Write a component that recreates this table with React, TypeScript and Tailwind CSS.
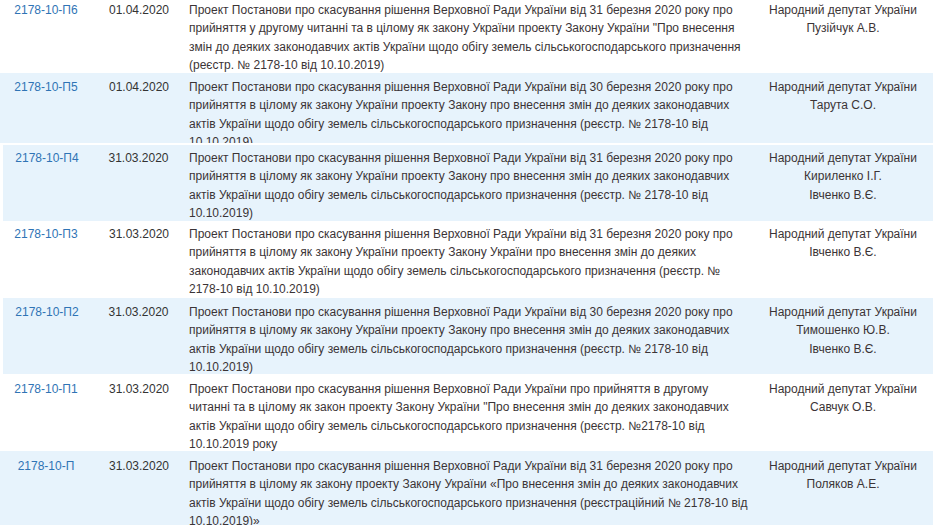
type Row = {
  id: string;
  date: string;
  lines: string[];
  deputies: string[];
  blue?: boolean;
  indent?: boolean;
  h: string;
  pt: string;
  gap?: boolean;
};

const ROWS: Row[] = [
  {
    id: "2178-10-П6",
    date: "01.04.2020",
    lines: [
      "Проект Постанови про скасування рішення Верховної Ради України від 31 березня 2020 року про",
      "прийняття у другому читанні та в цілому як закону України проекту Закону України \"Про внесення",
      "змін до деяких законодавчих актів України щодо обігу земель сільськогосподарського призначення",
      "(реєстр. № 2178-10 від 10.10.2019)",
    ],
    deputies: ["Пузійчук А.В."],
    h: "h-[73px]",
    pt: "pt-[1px]",
  },
  {
    id: "2178-10-П5",
    date: "01.04.2020",
    lines: [
      "Проект Постанови про скасування рішення Верховної Ради України від 30 березня 2020 року про",
      "прийняття в цілому як закону України проекту Закону про внесення змін до деяких законодавчих",
      "актів України щодо обігу земель сільськогосподарського призначення (реєстр. № 2178-10 від",
      "10.10.2019)",
    ],
    deputies: ["Тарута С.О."],
    blue: true,
    h: "h-[70px]",
    pt: "pt-[5px]",
    gap: true,
  },
  {
    id: "2178-10-П4",
    date: "31.03.2020",
    lines: [
      "Проект Постанови про скасування рішення Верховної Ради України від 31 березня 2020 року про",
      "прийняття в цілому як закону України проекту Закону про внесення змін до деяких законодавчих",
      "актів України щодо обігу земель сільськогосподарського призначення (реєстр. № 2178-10 від",
      "10.10.2019)",
    ],
    deputies: ["Кириленко І.Г.", "Івченко В.Є."],
    blue: true,
    indent: true,
    h: "h-[76px]",
    pt: "pt-[4px]",
  },
  {
    id: "2178-10-П3",
    date: "31.03.2020",
    lines: [
      "Проект Постанови про скасування рішення Верховної Ради України від 31 березня 2020 року про",
      "прийняття в цілому як закону України проекту Закону України про внесення змін до деяких",
      "законодавчих актів України щодо обігу земель сільськогосподарського призначення (реєстр. №",
      "2178-10 від 10.10.2019)",
    ],
    deputies: ["Івченко В.Є."],
    h: "h-[77px]",
    pt: "pt-[4px]",
  },
  {
    id: "2178-10-П2",
    date: "31.03.2020",
    lines: [
      "Проект Постанови про скасування рішення Верховної Ради України від 30 березня 2020 року про",
      "прийняття в цілому як закону України проекту Закону про внесення змін до деяких законодавчих",
      "актів України щодо обігу земель сільськогосподарського призначення (реєстр. № 2178-10 від",
      "10.10.2019)",
    ],
    deputies: ["Тимошенко Ю.В.", "Івченко В.Є."],
    blue: true,
    indent: true,
    h: "h-[76px]",
    pt: "pt-[5px]",
  },
  {
    id: "2178-10-П1",
    date: "31.03.2020",
    lines: [
      "Проект Постанови про скасування рішення Верховної Ради України про прийняття в другому",
      "читанні та в цілому як закон проекту Закону України \"Про внесення змін до деяких законодавчих",
      "актів України щодо обігу земель сільськогосподарського призначення (реєстр. №2178-10 від",
      "10.10.2019 року",
    ],
    deputies: ["Савчук О.В."],
    h: "h-[77px]",
    pt: "pt-[6px]",
  },
  {
    id: "2178-10-П",
    date: "31.03.2020",
    lines: [
      "Проект Постанови про скасування рішення Верховної Ради України від 31 березня 2020 року про",
      "прийняття в цілому як закону проекту Закону України «Про внесення змін до деяких законодавчих",
      "актів України щодо обігу земель сільськогосподарського призначення (реєстраційний № 2178-10 від",
      "10.10.2019)»",
    ],
    deputies: ["Поляков А.Е."],
    blue: true,
    h: "h-[77px]",
    pt: "pt-[6px]",
  },
];

function BillRow({ row }: { row: Row }) {
  return (
    <div className={`${row.indent ? "pl-[3px]" : ""} ${row.gap ? "mb-[2px]" : ""}`}>
      <div
        className={`flex overflow-hidden ${row.h} ${row.pt} ${row.blue ? "bg-[#e7f3fc]" : "bg-white"}`}
      >
        <div className={`${row.indent ? "w-[88px]" : "w-[92px]"} shrink-0 text-center`}>
          <a href="#" className="text-[#2f74b5] no-underline">{row.id}</a>
        </div>
        <div className={`${row.indent ? "w-[95px]" : "w-[94px]"} shrink-0 text-center text-[#333]`}>
          {row.date}
        </div>
        <div className="w-[564px] shrink-0 pl-[3px] text-[#3b3436]">
          {row.lines.map((l, i) => (
            <div key={i} className="whitespace-nowrap">{l}</div>
          ))}
        </div>
        <div className="w-[186px] shrink-0 text-center text-[#3b3436]">
          <div className="whitespace-nowrap">Народний депутат України</div>
          {row.deputies.map((d) => (
            <div key={d}>{d}</div>
          ))}
        </div>
      </div>
    </div>
  );
}

export default function App() {
  return (
    <div
      className="w-[933px] h-[525px] overflow-hidden bg-white text-[12px] leading-[18.3px]"
      style={{ fontFamily: "'Liberation Sans', Arial, sans-serif" }}
    >
      {ROWS.map((r) => (
        <BillRow key={r.id} row={r} />
      ))}
    </div>
  );
}
